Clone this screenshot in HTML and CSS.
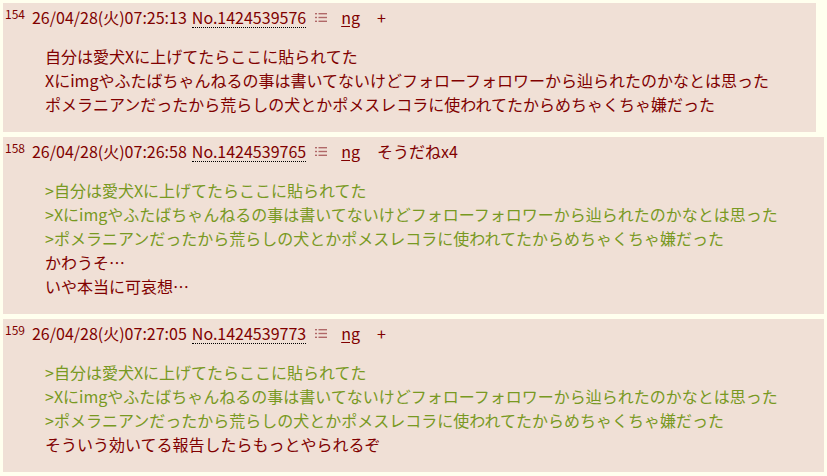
FILE: index.html
```html
<!DOCTYPE html>
<html lang="ja">
<head>
<meta charset="utf-8">
<link rel="stylesheet" href="styles.css">
</head>
<body>
<div class="thread">
  <div class="post">
    <div class="head"><span class="rsc">154</span><span class="date">26/04/28(火)07:25:13</span><span class="no">No.1424539576</span><svg class="menu" width="12" height="11" viewBox="0 0 12 11"><rect x="0" y="1" width="2" height="1.4"/><rect x="3.5" y="1" width="8.5" height="1.4"/><rect x="0" y="4.8" width="2" height="1.4"/><rect x="3.5" y="4.8" width="8.5" height="1.4"/><rect x="0" y="8.6" width="2" height="1.4"/><rect x="3.5" y="8.6" width="8.5" height="1.4"/></svg><span class="ng">ng</span><span class="sod">+</span></div>
    <blockquote class="body">自分は愛犬Xに上げてたらここに貼られてた<br>Xにimgやふたばちゃんねるの事は書いてないけどフォローフォロワーから辿られたのかなとは思った<br>ポメラニアンだったから荒らしの犬とかポメスレコラに使われてたからめちゃくちゃ嫌だった</blockquote>
  </div>
  <div class="post">
    <div class="head"><span class="rsc">158</span><span class="date">26/04/28(火)07:26:58</span><span class="no">No.1424539765</span><svg class="menu" width="12" height="11" viewBox="0 0 12 11"><rect x="0" y="1" width="2" height="1.4"/><rect x="3.5" y="1" width="8.5" height="1.4"/><rect x="0" y="4.8" width="2" height="1.4"/><rect x="3.5" y="4.8" width="8.5" height="1.4"/><rect x="0" y="8.6" width="2" height="1.4"/><rect x="3.5" y="8.6" width="8.5" height="1.4"/></svg><span class="ng">ng</span><span class="sod">そうだねx4</span></div>
    <blockquote class="body"><span class="quote">&gt;自分は愛犬Xに上げてたらここに貼られてた</span><br><span class="quote">&gt;Xにimgやふたばちゃんねるの事は書いてないけどフォローフォロワーから辿られたのかなとは思った</span><br><span class="quote">&gt;ポメラニアンだったから荒らしの犬とかポメスレコラに使われてたからめちゃくちゃ嫌だった</span><br>かわうそ…<br>いや本当に可哀想…</blockquote>
  </div>
  <div class="post">
    <div class="head"><span class="rsc">159</span><span class="date">26/04/28(火)07:27:05</span><span class="no">No.1424539773</span><svg class="menu" width="12" height="11" viewBox="0 0 12 11"><rect x="0" y="1" width="2" height="1.4"/><rect x="3.5" y="1" width="8.5" height="1.4"/><rect x="0" y="4.8" width="2" height="1.4"/><rect x="3.5" y="4.8" width="8.5" height="1.4"/><rect x="0" y="8.6" width="2" height="1.4"/><rect x="3.5" y="8.6" width="8.5" height="1.4"/></svg><span class="ng">ng</span><span class="sod">+</span></div>
    <blockquote class="body"><span class="quote">&gt;自分は愛犬Xに上げてたらここに貼られてた</span><br><span class="quote">&gt;Xにimgやふたばちゃんねるの事は書いてないけどフォローフォロワーから辿られたのかなとは思った</span><br><span class="quote">&gt;ポメラニアンだったから荒らしの犬とかポメスレコラに使われてたからめちゃくちゃ嫌だった</span><br>そういう効いてる報告したらもっとやられるぞ</blockquote>
  </div>
</div>
</body>
</html>
```

FILE: styles.css
```css
html, body {
  background: #ffffee;
}
body {
  margin: 3px;
  color: #800000;
  font-family: "Noto Sans CJK JP", "Noto Sans", sans-serif;
  font-size: 16px;
}
.thread {
  display: flex;
  flex-direction: column;
  align-items: flex-start;
  gap: 5px;
}
.post {
  background: #f0e0d6;
  padding: 3px 0 0 2px;
  white-space: nowrap;
}
.head {
  display: flex;
  align-items: center;
  height: 22px;
  line-height: 22px;
}
.rsc {
  font-size: 12px;
  line-height: 12px;
  align-self: flex-start;
  margin-top: 2px;
  margin-right: 7px;
}
.date {
  margin-right: 5px;
}
.no {
  line-height: 20px;
  border-bottom: 1px dotted #000;
  margin-right: 9px;
}
.menu {
  fill: #b06868;
  margin-right: 14px;
  margin-top: 1px;
}
.ng {
  text-decoration: underline;
  text-underline-offset: 2px;
  margin-right: 17px;
}
.body {
  margin: 16px 47px 16px 40px;
  line-height: 24px;
}
.quote {
  color: #789922;
}
```
